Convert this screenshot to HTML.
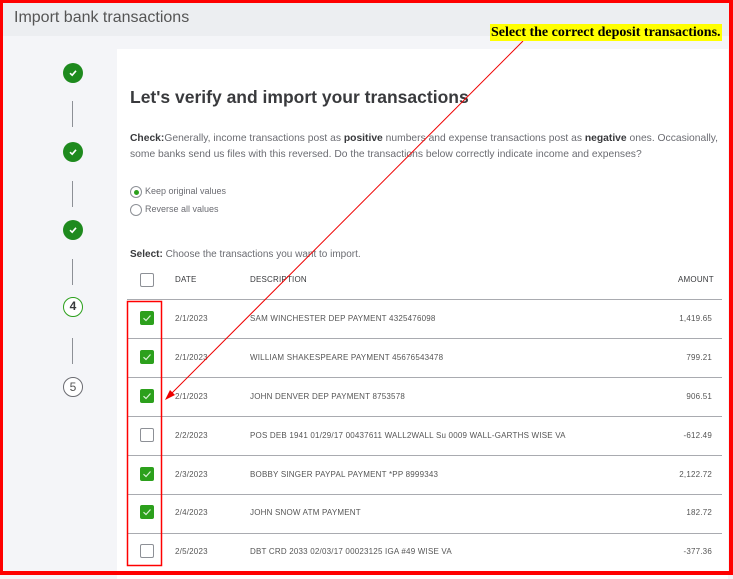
<!DOCTYPE html>
<html><head><meta charset="utf-8"><style>
*{margin:0;padding:0;box-sizing:border-box}
body{width:733px;height:575px;overflow:hidden;background:#f4f5f8;font-family:"Liberation Sans",Arial,sans-serif;position:relative;color:#393a3d}
.abs{position:absolute}
.hdr{left:0;top:0;width:733px;height:36px;background:#eceef1;font-size:16px;color:#555;padding:9px 0 0 14px}
.card{left:117px;top:49px;width:611px;height:530px;background:#fff}
.chk{width:20px;height:20px;border-radius:50%;background:#1e8a1e;left:63px}
.chk svg{position:absolute;left:5px;top:5px}
.vl{left:72px;width:1px;background:#8d9096}
.t{font-size:11px;color:#6b6c72}
.line{left:127px;width:595px;height:1px;background:#a9abb0}
.cb{left:140px;width:14px;height:14px;border-radius:2px}
.cb.on{background:#2ca01c}
.cb.off{border:1.5px solid #8d9096;background:#fff}
.cell{font-size:8px;color:#555;letter-spacing:.2px}
</style></head><body>
<div class="abs hdr">Import bank transactions</div>
<div class="abs card"></div>

<div class="abs chk" style="top:63px"><svg width="10" height="10" viewBox="0 0 10 10"><path d="M2 5.2 4.2 7.2 8 2.8" fill="none" stroke="#fff" stroke-width="1.6"/></svg></div>
<div class="abs vl" style="top:101px;height:26px"></div>
<div class="abs chk" style="top:142px"><svg width="10" height="10" viewBox="0 0 10 10"><path d="M2 5.2 4.2 7.2 8 2.8" fill="none" stroke="#fff" stroke-width="1.6"/></svg></div>
<div class="abs vl" style="top:181px;height:26px"></div>
<div class="abs chk" style="top:220px"><svg width="10" height="10" viewBox="0 0 10 10"><path d="M2 5.2 4.2 7.2 8 2.8" fill="none" stroke="#fff" stroke-width="1.6"/></svg></div>
<div class="abs vl" style="top:259px;height:26px"></div>
<div class="abs" style="left:63px;top:297px;width:20px;height:20px;border-radius:50%;border:1.5px solid #2ca01c;background:#fff;font-size:12px;font-weight:bold;text-align:center;line-height:17px;color:#393a3d">4</div>
<div class="abs vl" style="top:338px;height:26px"></div>
<div class="abs" style="left:63px;top:377px;width:20px;height:20px;border-radius:50%;border:1px solid #6b6c72;background:#fff;font-size:12px;text-align:center;line-height:18px;color:#555">5</div>

<div class="abs" style="left:130px;top:87px;font-size:17.5px;font-weight:bold;color:#393a3d">Let's verify and import your transactions</div>
<div class="abs t" style="left:130px;top:131px;width:590px;line-height:16px;font-size:10.3px"><b style="color:#393a3d">Check:</b>Generally, income transactions post as <b style="color:#393a3d">positive</b> numbers and expense transactions post as <b style="color:#393a3d">negative</b> ones. Occasionally, some banks send us files with this reversed. Do the transactions below correctly indicate income and expenses?</div>
<div class="abs" style="left:130px;top:186px;width:12px;height:12px;border-radius:50%;border:1px solid #8d9096;background:#fff"><div style="margin:2.5px;width:5px;height:5px;border-radius:50%;background:#2ca01c"></div></div>
<div class="abs t" style="left:145px;top:186px;font-size:9px">Keep original values</div>
<div class="abs" style="left:130px;top:204px;width:12px;height:12px;border-radius:50%;border:1px solid #8d9096;background:#fff"></div>
<div class="abs t" style="left:145px;top:204px;font-size:9px">Reverse all values</div>
<div class="abs t" style="left:130px;top:249px;font-size:10px"><b style="color:#393a3d">Select:</b> Choose the transactions you want to import.</div>

<div class="abs cb off" style="top:273px"></div>
<div class="abs cell" style="left:175px;top:275px;color:#393a3d">DATE</div>
<div class="abs cell" style="left:250px;top:275px;color:#393a3d">DESCRIPTION</div>
<div class="abs cell" style="left:678px;top:275px;color:#393a3d">AMOUNT</div>
<div class="abs line" style="top:299px"></div>

<div class="abs cb on" style="top:311px"><svg width="14" height="14"><path d="M3.5 7.2 6 9.5 10.5 4.5" fill="none" stroke="#d8f0d5" stroke-width="1.2"/></svg></div>
<div class="abs cell" style="left:175px;top:314px">2/1/2023</div><div class="abs cell" style="left:250px;top:314px">SAM WINCHESTER DEP PAYMENT 4325476098</div><div class="abs cell" style="right:21px;top:314px">1,419.65</div>
<div class="abs line" style="top:338px"></div>
<div class="abs cb on" style="top:350px"><svg width="14" height="14"><path d="M3.5 7.2 6 9.5 10.5 4.5" fill="none" stroke="#d8f0d5" stroke-width="1.2"/></svg></div>
<div class="abs cell" style="left:175px;top:353px">2/1/2023</div><div class="abs cell" style="left:250px;top:353px">WILLIAM SHAKESPEARE PAYMENT 45676543478</div><div class="abs cell" style="right:21px;top:353px">799.21</div>
<div class="abs line" style="top:377px"></div>
<div class="abs cb on" style="top:389px"><svg width="14" height="14"><path d="M3.5 7.2 6 9.5 10.5 4.5" fill="none" stroke="#d8f0d5" stroke-width="1.2"/></svg></div>
<div class="abs cell" style="left:175px;top:392px">2/1/2023</div><div class="abs cell" style="left:250px;top:392px">JOHN DENVER DEP PAYMENT 8753578</div><div class="abs cell" style="right:21px;top:392px">906.51</div>
<div class="abs line" style="top:416px"></div>
<div class="abs cb off" style="top:428px"></div>
<div class="abs cell" style="left:175px;top:431px">2/2/2023</div><div class="abs cell" style="left:250px;top:431px">POS DEB 1941 01/29/17 00437611 WALL2WALL Su 0009 WALL-GARTHS WISE VA</div><div class="abs cell" style="right:21px;top:431px">-612.49</div>
<div class="abs line" style="top:455px"></div>
<div class="abs cb on" style="top:467px"><svg width="14" height="14"><path d="M3.5 7.2 6 9.5 10.5 4.5" fill="none" stroke="#d8f0d5" stroke-width="1.2"/></svg></div>
<div class="abs cell" style="left:175px;top:470px">2/3/2023</div><div class="abs cell" style="left:250px;top:470px">BOBBY SINGER PAYPAL PAYMENT *PP 8999343</div><div class="abs cell" style="right:21px;top:470px">2,122.72</div>
<div class="abs line" style="top:494px"></div>
<div class="abs cb on" style="top:505px"><svg width="14" height="14"><path d="M3.5 7.2 6 9.5 10.5 4.5" fill="none" stroke="#d8f0d5" stroke-width="1.2"/></svg></div>
<div class="abs cell" style="left:175px;top:508px">2/4/2023</div><div class="abs cell" style="left:250px;top:508px">JOHN SNOW ATM PAYMENT</div><div class="abs cell" style="right:21px;top:508px">182.72</div>
<div class="abs line" style="top:533px"></div>
<div class="abs cb off" style="top:544px"></div>
<div class="abs cell" style="left:175px;top:547px">2/5/2023</div><div class="abs cell" style="left:250px;top:547px">DBT CRD 2033 02/03/17 00023125 IGA #49 WISE VA</div><div class="abs cell" style="right:21px;top:547px">-377.36</div>

<svg class="abs" style="left:0;top:0" width="733" height="575"><rect x="127.5" y="301.5" width="34" height="264" fill="none" stroke="#f00" stroke-width="1.5"/><line x1="523" y1="41" x2="169" y2="396" stroke="#e00" stroke-width="1"/><path d="M165 400 170 390 175 395Z" fill="#e00"/></svg>
<div class="abs" style="left:490px;top:24px;background:#ff0;font-family:'Liberation Serif',serif;font-weight:bold;font-size:14px;color:#000;padding:0 1px;line-height:17px">Select the correct deposit transactions.</div>
<div class="abs" style="left:0;top:0;width:733px;height:575px;border:3px solid #f00;border-right-width:4px;border-bottom-width:4px"></div>
</body></html>
